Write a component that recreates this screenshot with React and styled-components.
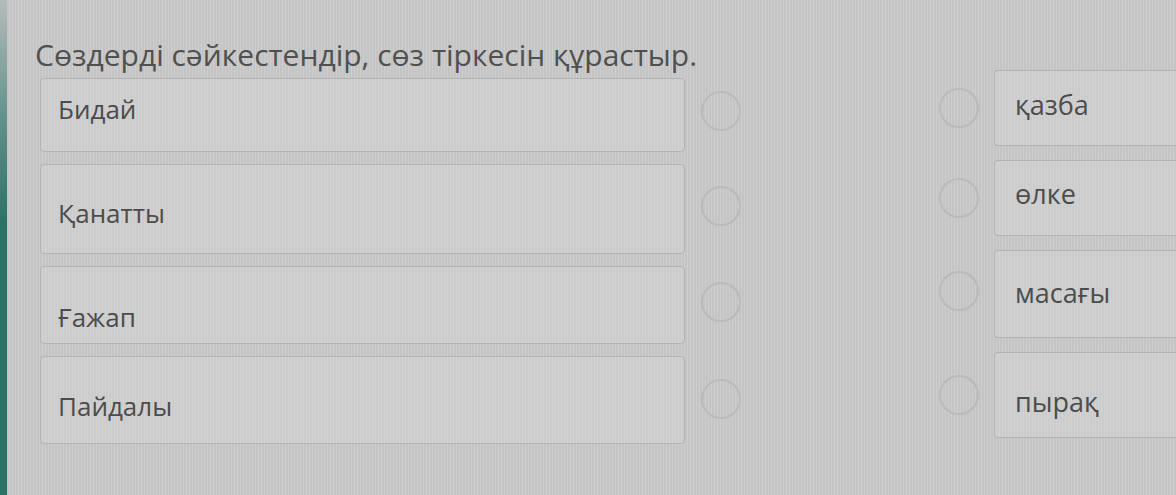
import React from 'react'
import styled, { createGlobalStyle } from 'styled-components'

const GlobalStyle = createGlobalStyle`
  html, body {
    margin: 0;
    padding: 0;
    background: #c9c9c9;
    font-family: "Open Sans", "Noto Sans", sans-serif;
    color: #4b4b4b;
  }
`

const Page = styled.div`
  display: flex;
  width: 1176px;
  height: 495px;
  overflow: hidden;
  background-color: #cacaca;
  background-image: repeating-linear-gradient(
    90deg,
    rgba(255, 255, 255, 0.08) 0px,
    rgba(255, 255, 255, 0.08) 1px,
    rgba(0, 0, 0, 0.03) 1px,
    rgba(0, 0, 0, 0.03) 3px
  );
`

const Strip = styled.div`
  width: 7px;
  flex-shrink: 0;
  background: linear-gradient(180deg, #b4bcbb 0%, #5f8f88 25%, #2c7269 45%, #2c7269 100%);
`

const Content = styled.div`
  flex: 1;
  padding: 36px 0 0 28px;
`

const Title = styled.h1`
  margin: 0 0 4px 0;
  font-size: 30px;
  font-weight: 400;
  line-height: 38px;
  color: #505050;
`

const Board = styled.div`
  display: flex;
  align-items: flex-start;
`

const Column = styled.div`
  display: flex;
  flex-direction: column;
  gap: ${({ $gap }) => $gap}px;
  margin-top: ${({ $top }) => $top}px;
  margin-left: ${({ $left }) => $left}px;
`

const Row = styled.div`
  display: flex;
  align-items: center;
  gap: ${({ $gap }) => $gap}px;
`

const Card = styled.div`
  box-sizing: border-box;
  width: ${({ $w }) => $w}px;
  height: ${({ $h }) => $h}px;
  display: flex;
  align-items: center;
  padding-left: ${({ $pad }) => $pad}px;
  border: 1px solid #b3b3b3;
  border-radius: 4px;
  background: rgba(214, 214, 214, 0.45);
  font-size: ${({ $size }) => $size}px;
  color: #4c4c4c;
  ${({ $open }) => $open && 'border-right: none; border-radius: 4px 0 0 4px;'}
`

const Label = styled.span`
  transform: translateY(${({ $shift }) => $shift}px);
`

const Circle = styled.div`
  width: 36px;
  height: 36px;
  flex-shrink: 0;
  border: 2px solid #bababa;
  border-radius: 50%;
  margin-top: ${({ $dy }) => $dy || 0}px;
`

const left = [
  { text: 'Бидай', h: 74, shift: -6, dy: -8 },
  { text: 'Қанатты', h: 90, shift: 4, dy: -6 },
  { text: 'Ғажап', h: 78, shift: 12, dy: -6 },
  { text: 'Пайдалы', h: 88, shift: 6, dy: -3 },
]

const right = [
  { text: 'қазба', h: 76, shift: -4, dy: 0 },
  { text: 'өлке', h: 76, shift: -5, dy: 0 },
  { text: 'масағы', h: 88, shift: -2, dy: -6 },
  { text: 'пырақ', h: 86, shift: 6, dy: 0 },
]

export default function App() {
  return (<>
    <GlobalStyle />
    <Page>
      <Strip />
      <Content>
        <Title>Сөздерді сәйкестендір, сөз тіркесін құрастыр.</Title>
        <Board>
          <Column $gap={12} $top={0} $left={5}>
            {left.map((item) => (
              <Row key={item.text} $gap={16}>
                <Card $w={645} $h={item.h} $pad={17} $size={26}>
                  <Label $shift={item.shift}>{item.text}</Label>
                </Card>
                <Circle $dy={item.dy} />
              </Row>
            ))}
          </Column>
          <Column $gap={14} $top={-8} $left={198}>
            {right.map((item) => (
              <Row key={item.text} $gap={15}>
                <Circle $dy={item.dy} />
                <Card $w={200} $h={item.h} $pad={20} $size={27} $open>
                  <Label $shift={item.shift}>{item.text}</Label>
                </Card>
              </Row>
            ))}
          </Column>
        </Board>
      </Content>
    </Page>
  </>)
}
